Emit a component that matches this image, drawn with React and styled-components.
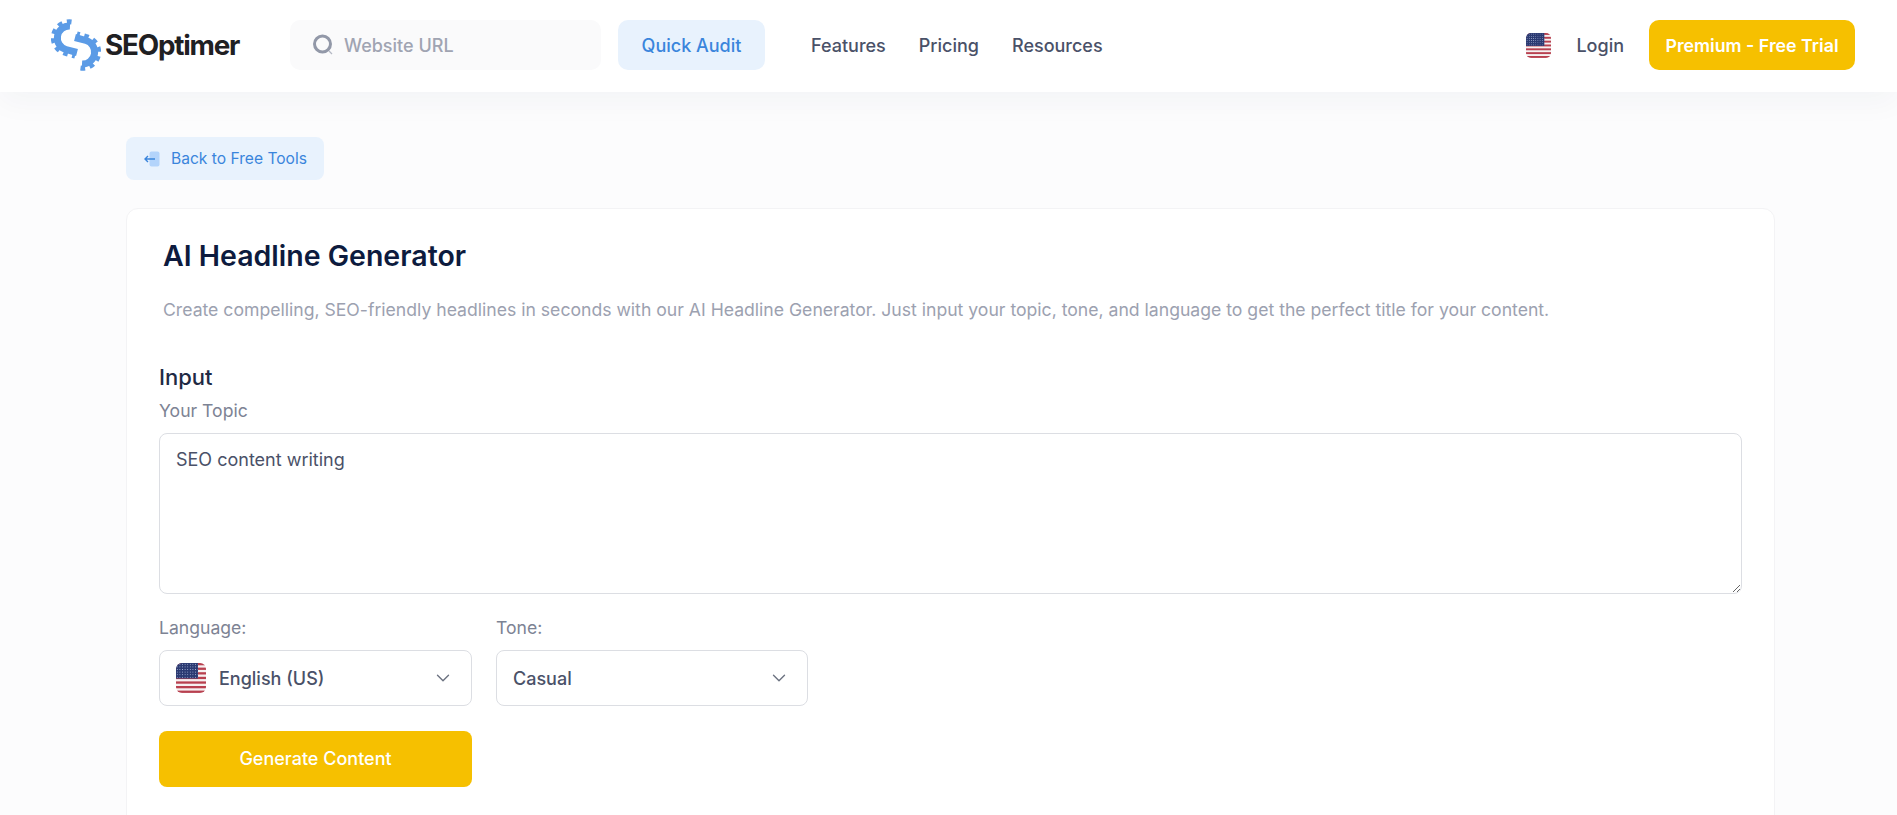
import React from 'react'
import styled, { createGlobalStyle } from 'styled-components'
import { ChevronDown } from 'lucide-react'

const GlobalStyle = createGlobalStyle`
    html, body {
        margin: 0;
        padding: 0;
        background-color: #fcfcfd;
        font-family: Inter, 'Liberation Sans', sans-serif;
        overflow: hidden;
    }
    * {
        box-sizing: border-box;
    }
`

const GearHalf = (props) => (
    <g {...props}>
        <path d="M19 8 A12 12 0 0 0 15 31.5 L26 34.5" stroke="#5b9be6" strokeWidth="7" />
        <path d="M20.5 4 A16 16 0 0 0 15 35.5 L24 38" stroke="#5b9be6" strokeWidth="5" strokeDasharray="4.6 4.6" />
    </g>
)

const LogoMark = () => (
    <svg width="50" height="54" viewBox="0 0 50 54" fill="none">
        <GearHalf />
        <GearHalf transform="rotate(180 25 27)" />
    </svg>
)

const Flag = ({ size }) => (
    <svg width={size} height={size} viewBox="0 0 30 30">
        <defs>
            <clipPath id="flagClip">
                <rect width="30" height="30" rx="6" />
            </clipPath>
            <pattern id="flagStars" width="2.6" height="2.6" patternUnits="userSpaceOnUse">
                <circle cx="1.3" cy="1.3" r="0.5" fill="#b9c5e4" />
            </pattern>
        </defs>
        <g clipPath="url(#flagClip)">
            <rect width="30" height="30" fill="#f6f1f1" />
            {[0, 4.6, 9.2, 13.8, 18.4, 23, 27.6].map((y) => (
                <rect key={y} y={y} width="30" height="2.3" fill="#b8404f" />
            ))}
            <rect width="22" height="15.5" fill="#2b3a72" />
            <rect width="22" height="15.5" fill="url(#flagStars)" />
        </g>
    </svg>
)

const BackIcon = () => (
    <svg width="16" height="16" viewBox="0 0 16 16" fill="none">
        <rect x="5.5" y="0.5" width="10" height="15" rx="2" fill="#b3d4fb" />
        <path d="M11 8 H1 M4 5 L1 8 L4 11" stroke="#3a85dc" strokeWidth="1.4" />
    </svg>
)

const SearchIcon = () => (
    <svg width="22" height="22" viewBox="0 0 22 22" fill="none">
        <circle cx="10.5" cy="10" r="8" stroke="#9298a8" strokeWidth="3" />
        <path d="M17 17 L20 20" stroke="#b4b8c4" strokeWidth="1.2" />
    </svg>
)

const App = () => {
    return (
        <>
            <GlobalStyle />
            <Header>
                <Logo>
                    <LogoMark />
                    <LogoText>SEOptimer</LogoText>
                </Logo>
                <SearchBox>
                    <SearchIcon />
                    <SearchText>Website URL</SearchText>
                </SearchBox>
                <QuickAudit>Quick Audit</QuickAudit>
                <Nav>
                    <NavLink>Features</NavLink>
                    <NavLink>Pricing</NavLink>
                    <NavLink>Resources</NavLink>
                </Nav>
                <HeaderRight>
                    <Flag size={25} />
                    <NavLink>Login</NavLink>
                    <PremiumButton>Premium - Free Trial</PremiumButton>
                </HeaderRight>
            </Header>
            <Main>
                <BackButton>
                    <BackIcon />
                    Back to Free Tools
                </BackButton>
                <Card>
                    <Title>AI Headline Generator</Title>
                    <Description>
                        Create compelling, SEO-friendly headlines in seconds with our AI Headline Generator. Just input your topic, tone, and language to get the perfect title for your content.
                    </Description>
                    <Form>
                        <SectionTitle>Input</SectionTitle>
                        <FieldLabel>Your Topic</FieldLabel>
                        <TopicInput defaultValue="SEO content writing" />
                        <SelectRow>
                            <div>
                                <FieldLabel>Language:</FieldLabel>
                                <SelectBox>
                                    <SelectValue>
                                        <Flag size={30} />
                                        English (US)
                                    </SelectValue>
                                    <ChevronDown size={22} strokeWidth={1.5} color="#6b7280" />
                                </SelectBox>
                            </div>
                            <div>
                                <FieldLabel>Tone:</FieldLabel>
                                <SelectBox>
                                    <SelectValue>Casual</SelectValue>
                                    <ChevronDown size={22} strokeWidth={1.5} color="#6b7280" />
                                </SelectBox>
                            </div>
                        </SelectRow>
                        <GenerateButton>Generate Content</GenerateButton>
                    </Form>
                </Card>
            </Main>
        </>
    )
}

const Header = styled.header`
    display: flex;
    align-items: center;
    height: 92px;
    padding: 0 42px 2px 51px;
    background-color: #fff;
    box-shadow: 0 10px 30px rgba(30, 40, 70, 0.04);
`

const Logo = styled.div`
    display: flex;
    align-items: center;
    gap: 4px;
    width: 239px;
`

const LogoText = styled.span`
    font-size: 27.8px;
    font-weight: 700;
    letter-spacing: -1.2px;
    color: #1f2023;
`

const SearchBox = styled.div`
    display: flex;
    align-items: center;
    gap: 10px;
    width: 311px;
    height: 50px;
    padding-left: 22px;
    border-radius: 10px;
    background-color: #fafafb;
`

const SearchText = styled.span`
    font-size: 18px;
    font-weight: 500;
    color: #a0a4b2;
`

const QuickAudit = styled.button`
    width: 147px;
    height: 50px;
    margin-left: 17px;
    border: none;
    border-radius: 10px;
    background-color: #e8f2fd;
    color: #3a85dc;
    font-family: inherit;
    font-size: 18px;
    font-weight: 500;
`

const Nav = styled.nav`
    display: flex;
    gap: 33px;
    margin-left: 46px;
`

const NavLink = styled.a`
    font-size: 18px;
    font-weight: 500;
    color: #4a5168;
`

const HeaderRight = styled.div`
    display: flex;
    align-items: center;
    gap: 25px;
    margin-left: auto;
`

const PremiumButton = styled.button`
    width: 206px;
    height: 50px;
    border: none;
    border-radius: 10px;
    background-color: #f6c000;
    color: #fff;
    font-family: inherit;
    font-size: 17.8px;
    font-weight: 600;
`

const Main = styled.main`
    padding: 45px 122px 0 126px;
`

const BackButton = styled.div`
    display: inline-flex;
    align-items: center;
    gap: 11px;
    height: 43px;
    padding: 0 17px 0 18px;
    border-radius: 8px;
    background-color: #e8f2fd;
    color: #3a85dc;
    font-size: 15.6px;
    font-weight: 400;
`

const Card = styled.section`
    height: 640px;
    margin-top: 28px;
    padding: 30px 32px;
    border: 1px solid #f3f3f5;
    border-radius: 12px;
    background-color: #fff;
`

const Title = styled.h1`
    margin: 0 0 0 4px;
    font-size: 28.5px;
    line-height: 34px;
    font-weight: 600;
    color: #0d1b3e;
`

const Description = styled.p`
    margin: 24px 0 0 4px;
    font-size: 17.63px;
    line-height: 26px;
    color: #9ca1b0;
`

const Form = styled.div`
    display: flex;
    flex-direction: column;
    align-items: flex-start;
    margin-top: 41px;
`

const SectionTitle = styled.h2`
    margin: 0;
    font-size: 22px;
    line-height: 26px;
    font-weight: 500;
    color: #1f2a44;
`

const FieldLabel = styled.label`
    display: block;
    margin-top: 9px;
    font-size: 17.6px;
    line-height: 24px;
    color: #7d8394;
`

const TopicInput = styled.textarea`
    display: block;
    width: 100%;
    height: 161px;
    margin-top: 10px;
    padding: 15px 16px;
    border: 1px solid #dcdee3;
    border-radius: 8px;
    font-family: inherit;
    font-size: 18px;
    font-weight: 400;
    line-height: 22px;
    color: #4a5168;
    background-color: #fff;
    outline: none;
`

const SelectRow = styled.div`
    display: grid;
    grid-template-columns: 313px 312px;
    gap: 24px;
    margin-top: 13px;
`

const SelectBox = styled.div`
    display: flex;
    align-items: center;
    justify-content: space-between;
    height: 56px;
    margin-top: 10px;
    padding: 0 17px 0 16px;
    border: 1px solid #dcdee3;
    border-radius: 8px;
    background-color: #fff;
`

const SelectValue = styled.span`
    display: flex;
    align-items: center;
    gap: 13px;
    font-size: 18px;
    font-weight: 500;
    color: #4a5168;
`

const GenerateButton = styled.button`
    width: 313px;
    height: 56px;
    margin-top: 25px;
    padding-bottom: 2px;
    border: none;
    border-radius: 8px;
    background-color: #f6c000;
    color: #fff;
    font-family: inherit;
    font-size: 18px;
    font-weight: 500;
`

export default App
